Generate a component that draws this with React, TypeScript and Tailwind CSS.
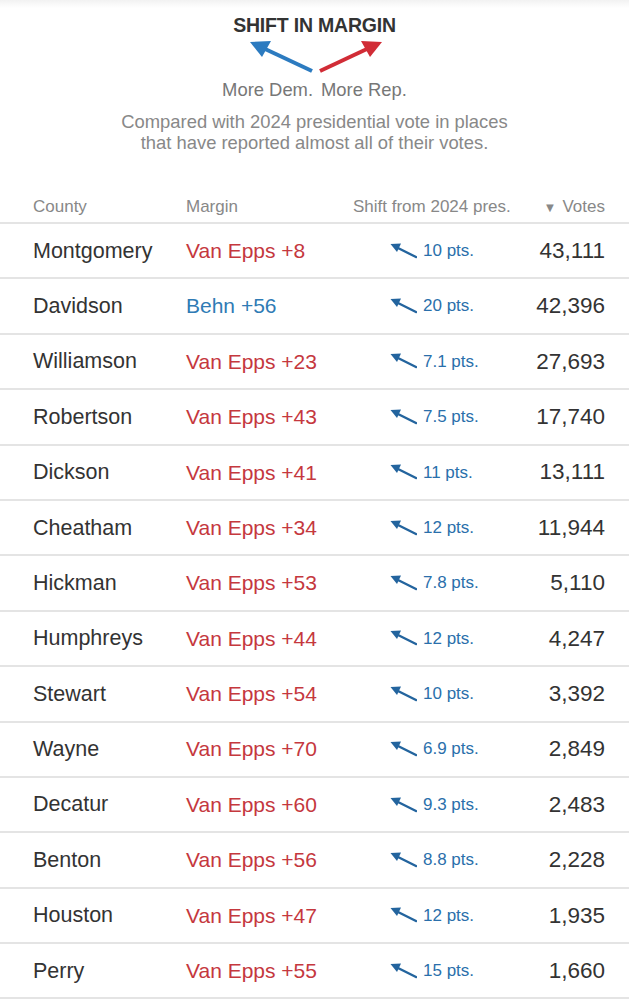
// County results table with a "shift in margin" legend on top.

const ROWS: {
  county: string;
  winner: "rep" | "dem";
  margin: string;
  shift: string;
  votes: string;
}[] = [
  { county: "Montgomery", winner: "rep", margin: "Van Epps +8", shift: "10 pts.", votes: "43,111" },
  { county: "Davidson", winner: "dem", margin: "Behn +56", shift: "20 pts.", votes: "42,396" },
  { county: "Williamson", winner: "rep", margin: "Van Epps +23", shift: "7.1 pts.", votes: "27,693" },
  { county: "Robertson", winner: "rep", margin: "Van Epps +43", shift: "7.5 pts.", votes: "17,740" },
  { county: "Dickson", winner: "rep", margin: "Van Epps +41", shift: "11 pts.", votes: "13,111" },
  { county: "Cheatham", winner: "rep", margin: "Van Epps +34", shift: "12 pts.", votes: "11,944" },
  { county: "Hickman", winner: "rep", margin: "Van Epps +53", shift: "7.8 pts.", votes: "5,110" },
  { county: "Humphreys", winner: "rep", margin: "Van Epps +44", shift: "12 pts.", votes: "4,247" },
  { county: "Stewart", winner: "rep", margin: "Van Epps +54", shift: "10 pts.", votes: "3,392" },
  { county: "Wayne", winner: "rep", margin: "Van Epps +70", shift: "6.9 pts.", votes: "2,849" },
  { county: "Decatur", winner: "rep", margin: "Van Epps +60", shift: "9.3 pts.", votes: "2,483" },
  { county: "Benton", winner: "rep", margin: "Van Epps +56", shift: "8.8 pts.", votes: "2,228" },
  { county: "Houston", winner: "rep", margin: "Van Epps +47", shift: "12 pts.", votes: "1,935" },
  { county: "Perry", winner: "rep", margin: "Van Epps +55", shift: "15 pts.", votes: "1,660" },
];

function ShiftArrow() {
  // small blue arrow pointing up-left (toward Dem.)
  return (
    <svg width="28" height="16" viewBox="0 0 28 16" className="shrink-0">
      <line x1="27" y1="14" x2="8" y2="4.5" stroke="#23649e" strokeWidth="2.4" strokeLinecap="round" />
      <polygon points="1.5,1 12,0.5 8,9" fill="#23649e" />
    </svg>
  );
}

function LegendArrows() {
  return (
    <svg width="140" height="34" viewBox="0 0 140 34">
      <line x1="65" y1="32" x2="16" y2="9" stroke="#2c7bc0" strokeWidth="4" />
      <polygon points="3,3 24,2 15,18" fill="#2c7bc0" />
      <line x1="73" y1="32" x2="122" y2="9" stroke="#d12c36" strokeWidth="4" />
      <polygon points="135,3 114,2 123,18" fill="#d12c36" />
    </svg>
  );
}

export default function App() {
  return (
    <div
      className="min-h-screen w-[629px] bg-white text-[#333]"
      style={{ fontFamily: '"Liberation Sans", Arial, sans-serif' }}
    >
      <div className="h-[8px] bg-gradient-to-b from-[#f2f2f2] to-white" />
      <div className="flex flex-col items-center">
        <h1 className="mt-[6px] text-[19.5px] font-bold leading-[22px] tracking-[-0.2px] text-[#333]">
          SHIFT IN MARGIN
        </h1>
        <div className="mt-[3px] pl-[4px]">
          <LegendArrows />
        </div>
        <div className="mt-[6px] flex gap-[8px] text-[18.4px] leading-[21px] text-[#777]">
          <span>More Dem.</span>
          <span>More Rep.</span>
        </div>
        <p className="mt-[11px] text-center text-[18.4px] leading-[21px] text-[#888]">
          Compared with 2024 presidential vote in places
          <br />
          that have reported almost all of their votes.
        </p>
      </div>

      <div className="mt-[41px]">
        <div className="flex h-[30px] items-start border-b-2 border-[#e4e4e4] pt-[3px] text-[17px] leading-[19px] text-[#888]">
          <div className="w-[186px] pl-[33px]">County</div>
          <div className="w-[167px]">Margin</div>
          <div className="w-[170px]">Shift from 2024 pres.</div>
          <div className="flex-1 pr-[24px] text-right">
            <span className="mr-[6px] text-[13px]">▼</span>Votes
          </div>
        </div>

        {ROWS.map((r) => (
          <div
            key={r.county}
            className="flex h-[55.4px] items-center border-b-2 border-[#e4e4e4] text-[21px]"
          >
            <div className="w-[186px] pl-[33px] text-[#333] text-[21.5px]">{r.county}</div>
            <div
              className={`w-[167px] ${r.winner === "rep" ? "text-[#c5383e]" : "text-[#2f7bb5]"}`}
            >
              {r.margin}
            </div>
            <div className="flex w-[170px] items-center gap-[6px] pl-[36px]">
              <ShiftArrow />
              <span className="text-[17px] text-[#2a6fab]">{r.shift}</span>
            </div>
            <div className="flex-1 pr-[24px] text-right text-[22.5px] text-[#333]">{r.votes}</div>
          </div>
        ))}
      </div>
    </div>
  );
}
